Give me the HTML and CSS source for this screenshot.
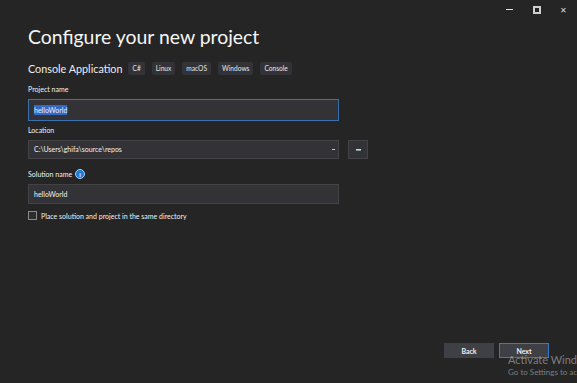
FILE: index.html
```html
<!DOCTYPE html>
<html lang="en">
<head>
  <meta charset="UTF-8">
  <title>Configure your new project</title>
  <link rel="stylesheet" href="styles.css">
</head>
<body>
  <div class="window">
    <div class="titlebar">
      <span class="ctl ctl-min"></span>
      <span class="ctl ctl-max"></span>
      <span class="ctl ctl-close">&#x2715;</span>
    </div>

    <div class="content">
      <h1>Configure your new project</h1>
      <div class="template">
        <span class="template-name">Console Application</span>
        <span class="tag">C#</span>
        <span class="tag">Linux</span>
        <span class="tag">macOS</span>
        <span class="tag">Windows</span>
        <span class="tag">Console</span>
      </div>

      <div class="field field-project">
        <label>Project name</label>
        <div class="input focused"><span class="sel">helloWorld</span></div>
      </div>

      <div class="field field-location">
        <label>Location</label>
        <div class="row">
          <div class="input select">C:\Users\ghifa\source\repos<span class="caret"></span></div>
          <div class="browse"><span class="dots"></span></div>
        </div>
      </div>

      <div class="field field-solution">
        <label>Solution name <span class="info">i</span></label>
        <div class="input">helloWorld</div>
      </div>

      <div class="check">
        <span class="box"></span>
        <span>Place solution and project in the same directory</span>
      </div>
    </div>

    <div class="footer">
      <button class="btn">Back</button>
      <button class="btn primary">Next</button>
    </div>

    <!-- watermark -->
    <div class="activate">
      <div class="act-title">Activate Windows</div>
      <div class="act-sub">Go to Settings to activate Windows.</div>
    </div>
  </div>
</body>
</html>
```

FILE: styles.css
```css
html, body {
  margin: 0;
  height: 100%;
}

body {
  background-color: #252526;
  color: #f1f1f1;
  font-family: Lato, "Noto Sans", sans-serif;
  overflow: hidden;
}

.window {
  position: relative;
  height: 383px;
  display: flex;
  flex-direction: column;
}

.titlebar {
  height: 19px;
  display: flex;
  justify-content: flex-end;
  align-items: center;
}

.ctl {
  width: 27px;
  height: 19px;
  display: flex;
  align-items: center;
  justify-content: center;
  color: #d8d8d8;
  font-size: 8px;
}

.ctl-min::before {
  content: "";
  width: 7px;
  height: 1px;
  background: #e0e0e0;
}

.ctl-max::before {
  content: "";
  width: 4px;
  height: 4px;
  border: 2px solid #d0d0d0;
}

.content {
  flex: 1;
  padding-left: 28px;
}

h1 {
  margin: 4px 0 0;
  font-weight: 400;
  font-size: 19.4px;
  line-height: 28px;
  color: #f5f5f5;
}

.template {
  display: flex;
  align-items: center;
  margin-top: 10px;
  height: 14px;
}

.template-name {
  font-size: 10.8px;
  margin-right: 6px;
  color: #eeeeee;
}

.tag {
  background: #333337;
  border-radius: 2px;
  font-size: 6.6px;
  height: 13px;
  line-height: 13px;
  padding: 0 4px;
  margin-right: 7px;
  color: #e8e8e8;
}

.field label {
  display: flex;
  align-items: center;
  font-size: 7px;
  height: 12px;
  margin-bottom: 4px;
  color: #f1f1f1;
}

.field-project { margin-top: 8px; }
.field-location { margin-top: 3px; }
.field-solution { margin-top: 9px; }

.input {
  box-sizing: border-box;
  width: 311px;
  height: 20px;
  background: #333337;
  border: 1px solid #434346;
  font-size: 7px;
  line-height: 18px;
  padding-left: 5px;
  color: #f1f1f1;
}

.input.focused {
  height: 22px;
  line-height: 20px;
  border-color: #3a6fb0;
}

.sel {
  background: #3367c8;
  padding: 1px 0;
}

.row {
  display: flex;
  gap: 9px;
}

.select {
  position: relative;
  height: 19px;
  line-height: 17px;
}

.caret {
  position: absolute;
  right: 3px;
  top: 8px;
  width: 3px;
  height: 1px;
  background: #c8c8c8;
}

.browse {
  box-sizing: border-box;
  width: 20px;
  height: 19px;
  background: #333337;
  border: 1px solid #434346;
  display: flex;
  align-items: center;
  justify-content: center;
}

.dots {
  width: 5px;
  height: 1px;
  background: #cfd6d8;
  box-shadow: 0 1px 0 #7f9c9a;
}

.info {
  display: inline-flex;
  align-items: center;
  justify-content: center;
  width: 8px;
  height: 8px;
  border-radius: 50%;
  background: #1c7cd5;
  border: 1px solid #9fd0ff;
  color: #fff;
  font-size: 6px;
  font-weight: bold;
  margin-left: 3px;
}

.check {
  display: flex;
  align-items: center;
  margin-top: 7px;
  font-size: 7px;
  color: #f1f1f1;
}

.box {
  box-sizing: border-box;
  width: 9px;
  height: 9px;
  border: 1px solid #8a8a8a;
  background: #2d2d30;
  margin-right: 4px;
}

.footer {
  display: flex;
  justify-content: flex-end;
  gap: 5px;
  padding: 0 28px 25px 0;
}

.btn {
  box-sizing: border-box;
  width: 50px;
  height: 15px;
  background: #3f3f46;
  border: 1px solid #3f3f46;
  color: #f1f1f1;
  font-family: inherit;
  font-size: 7px;
  font-weight: bold;
  padding: 0;
}

.btn.primary {
  border-color: #3a79c4;
}

.activate {
  position: absolute;
  left: 508px;
  right: 0;
  top: 353px;
  overflow: hidden;
  white-space: nowrap;
  color: rgba(200, 200, 200, 0.55);
}

.act-title {
  font-size: 11px;
  line-height: 13px;
}

.act-sub {
  font-size: 8px;
  line-height: 12px;
}
```
